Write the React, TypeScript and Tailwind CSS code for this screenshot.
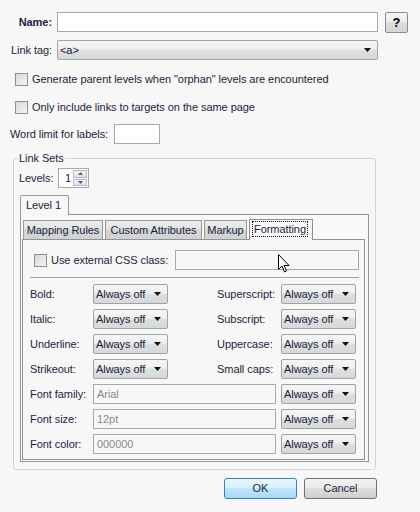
import React from "react";

const Arrow = () => (
  <svg width="7" height="4" viewBox="0 0 7 4" className="shrink-0">
    <path d="M0 0h7L3.5 4z" fill="#111" />
  </svg>
);

const Select = ({ value, className }: { value: string; className: string }) => (
  <div
    className={`flex items-center h-[20px] border border-[#a2a2a2] rounded-[2px] bg-[linear-gradient(#f6f6f6_0%,#efefef_45%,#dde0e0_50%,#d6d9d9_100%)] pl-[2px] pr-[6px] ${className}`}
  >
    <span className="flex-1 whitespace-nowrap">{value}</span>
    <Arrow />
  </div>
);

const Checkbox = () => (
  <div className="w-[13px] h-[13px] shrink-0 border border-[#8e8f8f] bg-[linear-gradient(135deg,#d9d9d9_0%,#f4f4f4_100%)]" />
);

const TextBox = ({ value, className }: { value?: string; className: string }) => (
  <div className={`flex items-center h-[20px] border border-[#a9a9a9] bg-[#f7f7f7] pl-[3px] text-[#8a8a8a] ${className}`}>
    {value}
  </div>
);

const Tab = ({ label, width, active }: { label: string; width: string; active?: boolean }) =>
  active ? (
    <div className={`relative z-10 -mb-px h-[21px] pl-[3px] pt-[2px] border border-b-0 border-[#8f8f8f] bg-[#f9f9f9] ${width}`}>
      <span className="inline-block px-[1px] leading-[14px] outline-1 outline-dotted outline-[#111]">{label}</span>
    </div>
  ) : (
    <div className={`h-[19px] flex items-center justify-center whitespace-nowrap border border-b-0 border-[#999] bg-[linear-gradient(#ececec_0%,#e4e4e4_45%,#d3d6d6_50%,#d0d3d3_100%)] ${width}`}>
      {label}
    </div>
  );

const rows: [string, string][] = [
  ["Bold:", "Superscript:"],
  ["Italic:", "Subscript:"],
  ["Underline:", "Uppercase:"],
  ["Strikeout:", "Small caps:"],
];

const fontRows: [string, string][] = [
  ["Font family:", "Arial"],
  ["Font size:", "12pt"],
  ["Font color:", "000000"],
];

export default function App() {
  return (
    <div className="relative w-[420px] h-[512px] overflow-hidden bg-[#f7f7f7] text-[11px] leading-[13px] tracking-[-0.06px] text-[#1d1d3b] font-['Liberation_Sans',Arial,sans-serif]">
      <div className="pt-[12px]">
        <div className="flex items-center h-[20px]">
          <span className="w-[52px] text-right font-bold">Name:</span>
          <div className="ml-[5px] w-[321px] h-[20px] bg-white border border-[#a9a9a9]" />
          <div className="ml-[7px] w-[23px] h-[21px] flex items-center justify-center border border-[#8c8c8c] rounded-[2px] bg-[linear-gradient(#f6f6f6_0%,#eeeeee_45%,#dcdede_50%,#d4d6d6_100%)] font-bold text-[13px] text-black">
            ?
          </div>
        </div>

        <div className="mt-[8px] flex items-center h-[20px]">
          <span className="w-[52px] text-right">Link tag:</span>
          <Select className="ml-[5px] w-[321px]" value="<a>" />
        </div>

        <div className="mt-[13px] flex items-center pl-[15px] h-[13px]">
          <Checkbox />
          <span className="ml-[4px]">Generate parent levels when "orphan" levels are encountered</span>
        </div>
        <div className="mt-[15px] flex items-center pl-[15px] h-[13px]">
          <Checkbox />
          <span className="ml-[4px]">Only include links to targets on the same page</span>
        </div>

        <div className="mt-[10px] flex items-center pl-[10px] h-[20px]">
          <span className="w-[104px]">Word limit for labels:</span>
          <div className="w-[46px] h-[20px] bg-white border border-[#a9a9a9]" />
        </div>

        <fieldset className="mt-[8px] ml-[13px] w-[363px] border border-[#d4d4d4] rounded-[3px] px-[6px] pt-[3px] pb-[7px]">
          <legend className="-ml-[2px] px-[1px] leading-[13px]">Link Sets</legend>

          <div className="flex items-center h-[20px]">
            <span className="w-[39px] -ml-[1px]">Levels:</span>
            <div className="w-[31px] h-[20px] flex border border-[#a9a9a9] bg-white">
              <span className="flex-1 pl-[6px] leading-[18px]">1</span>
              <div className="w-[15px] flex flex-col gap-[1px] py-[1px] pr-[1px]">
                <div className="flex-1 flex items-center justify-center border border-[#b3bcc7] bg-[linear-gradient(#f4f6f8,#dde3ea)]">
                  <svg width="5" height="3" viewBox="0 0 5 3"><path d="M0 3L2.5 0L5 3z" fill="#4d6185" /></svg>
                </div>
                <div className="flex-1 flex items-center justify-center border border-[#b3bcc7] bg-[linear-gradient(#f4f6f8,#dde3ea)]">
                  <svg width="5" height="3" viewBox="0 0 5 3"><path d="M0 0h5L2.5 3z" fill="#4d6185" /></svg>
                </div>
              </div>
            </div>
          </div>

          <div className="mt-[7px] flex">
            <div className="relative z-10 -mb-px w-[49px] h-[20px] pl-[5px] pt-[3px] border border-b-0 border-[#999] rounded-t-[2px] bg-[#f7f7f7]">
              Level 1
            </div>
          </div>

          <div className="border border-[#959595] pl-[1px] pr-[3px] pt-[4px] pb-[1px] bg-[#f9f9f9]">
            <div className="flex items-end gap-[2px] ml-[1px]">
              <Tab label="Mapping Rules" width="w-[80px]" />
              <Tab label="Custom Attributes" width="w-[97px]" />
              <Tab label="Markup" width="w-[43px]" />
              <Tab label="Formatting" width="w-[64px]" active />
            </div>

            <div className="border border-[#929292] bg-[#f7f7f7] pl-[7px] pr-[5px] pt-[10px] pb-[5px]">
              <div className="flex items-center h-[20px]">
                <div className="ml-[4px]"><Checkbox /></div>
                <span className="ml-[4px]">Use external CSS class:</span>
                <TextBox className="ml-auto w-[184px]" />
              </div>

              <div className="mt-[7px] h-px bg-[#a6a6a6]" />

              <div className="mt-[6px] grid grid-cols-[63px_75px_49px_64px_75px] gap-y-[5px] items-center">
                {rows.map(([l, r]) => (
                  <React.Fragment key={l}>
                    <span>{l}</span>
                    <Select className="w-[75px]" value="Always off" />
                    <span />
                    <span>{r}</span>
                    <Select className="w-[75px]" value="Always off" />
                  </React.Fragment>
                ))}
                {fontRows.map(([l, v]) => (
                  <React.Fragment key={l}>
                    <span>{l}</span>
                    <TextBox className="col-span-3 w-[183px]" value={v} />
                    <Select className="w-[75px]" value="Always off" />
                  </React.Fragment>
                ))}
              </div>
            </div>
          </div>
        </fieldset>

        <div className="mt-[8px] flex justify-end gap-[7px] pr-[43px]">
          <div className="w-[73px] h-[21px] flex items-center justify-center border border-[#3c7fb1] rounded-[3px] bg-[linear-gradient(#eaf6fd_0%,#d9f0fc_45%,#bee6fd_50%,#a7d9f5_100%)]">
            OK
          </div>
          <div className="w-[73px] h-[21px] flex items-center justify-center border border-[#707070] rounded-[3px] bg-[linear-gradient(#f2f2f2_0%,#ebebeb_45%,#dddddd_50%,#cfcfcf_100%)]">
            Cancel
          </div>
        </div>
      </div>

      <svg className="absolute left-[278px] top-[254px]" width="12" height="19" viewBox="0 0 12 19">
        <path d="M0.5 0.5v15l3.5-3.5 2.5 6 2-1-2.5-5.5h5z" fill="#fff" stroke="#000" strokeWidth="1" strokeLinejoin="miter" />
      </svg>
    </div>
  );
}
